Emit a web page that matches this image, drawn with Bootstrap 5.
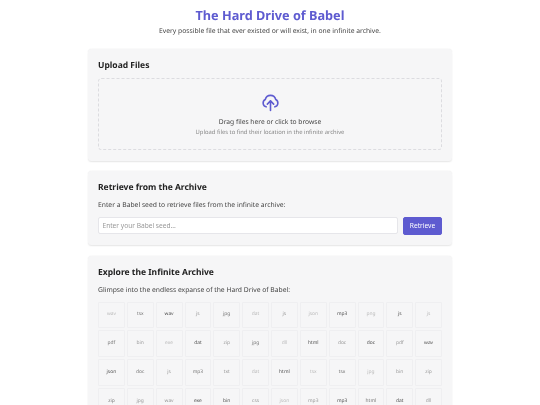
<!DOCTYPE html>
<html lang="en"><head><meta charset="utf-8"><title>The Hard Drive of Babel</title>
<link href="https://cdn.jsdelivr.net/npm/bootstrap@5.3.0/dist/css/bootstrap.min.css" rel="stylesheet">
<style>
html,body{overflow:hidden;height:405px}
body{font-family:"Noto Sans",sans-serif;color:#333;background:#fff;font-size:7px;text-rendering:geometricPrecision}
.page-wrap{width:364px;margin:0 auto;padding-top:5px;filter:blur(.3px)}
.site-title{font-size:12.7px;font-weight:700;color:#5e5bd0;margin:0;line-height:20px}
.site-sub{font-size:6.75px;color:#444;margin:0 0 13px;line-height:11px}
.panel{background:#f6f6f7;border:0;border-radius:3.5px;box-shadow:0 .5px 1.5px rgba(0,0,0,.1);padding:11px 10px 10.5px;margin-bottom:10.25px}
.panel-title{font-size:8.5px;font-weight:700;color:#222;line-height:12px;margin:0 0 5.5px}
.drop-zone{border:.7px dashed #dcdce0;border-radius:3.5px;height:72px;margin-top:6px;padding-top:14px;text-align:center}
.drop-zone svg{display:block;margin:0 auto 4px;width:19px;height:19px}
.drop-main{font-size:6.7px;color:#444;line-height:11px}
.drop-hint{font-size:5.85px;color:#888;line-height:9px;margin-top:.5px}
.panel-text{font-size:6.75px;color:#444;line-height:11px;margin:0 0 6.5px}
.seed-input{font-size:6.6px;height:17px;min-height:0;padding:0 3.5px;border-radius:2px;border:.7px solid #e6e6ea;color:#333}
.seed-input::placeholder{color:#999}
.seed-row{gap:5px}
.seed-btn{font-size:6.6px;height:18px;width:39px;padding:0;border-radius:2px;background:#5e5bd0;border-color:#5e5bd0;color:#fff;flex:none}
.cell-grid{display:grid;grid-template-columns:repeat(12,1fr);gap:2px}
.cell-item{height:26.8px;border:.7px solid #efeff1;border-radius:1px;font-size:4.9px;color:#555;background:#f6f6f7}
.o3{color:#bbb}.o5{color:#999}.o7{color:#777}.o9{color:#505050}
</style></head><body>
<div class="page-wrap">
<header class="text-center">
<h1 class="site-title">The Hard Drive of Babel</h1>
<p class="site-sub">Every possible file that ever existed or will exist, in one infinite archive.</p>
</header>
<section class="panel">
<h2 class="panel-title">Upload Files</h2>
<div class="drop-zone">
<svg viewBox="0 0 24 24" fill="none" stroke="#5e5bd0" stroke-width="2" stroke-linecap="round" stroke-linejoin="round"><path d="M6.5 17.5A5 5 0 0 1 5.4 8.2 6.8 6.8 0 0 1 18.6 8.2 5 5 0 0 1 17.5 17.5"/><path d="M12 22V10"/><path d="M8 14l4-4 4 4"/></svg>
<div class="drop-main">Drag files here or click to browse</div>
<div class="drop-hint">Upload files to find their location in the infinite archive</div>
</div>
</section>
<section class="panel">
<h2 class="panel-title">Retrieve from the Archive</h2>
<p class="panel-text">Enter a Babel seed to retrieve files from the infinite archive:</p>
<div class="d-flex seed-row align-items-center">
<input class="form-control seed-input" type="text" placeholder="Enter your Babel seed...">
<button class="btn btn-primary seed-btn" type="button">Retrieve</button>
</div>
</section>
<section class="panel">
<h2 class="panel-title">Explore the Infinite Archive</h2>
<p class="panel-text">Glimpse into the endless expanse of the Hard Drive of Babel:</p>
<div class="cell-grid">
<div class="cell-item d-flex align-items-center justify-content-center o3">wav</div><div class="cell-item d-flex align-items-center justify-content-center o7">tsx</div><div class="cell-item d-flex align-items-center justify-content-center o9">wav</div><div class="cell-item d-flex align-items-center justify-content-center o5">js</div><div class="cell-item d-flex align-items-center justify-content-center o7">jpg</div><div class="cell-item d-flex align-items-center justify-content-center o3">dat</div><div class="cell-item d-flex align-items-center justify-content-center o5">js</div><div class="cell-item d-flex align-items-center justify-content-center o3">json</div><div class="cell-item d-flex align-items-center justify-content-center o9">mp3</div><div class="cell-item d-flex align-items-center justify-content-center o3">png</div><div class="cell-item d-flex align-items-center justify-content-center o9">js</div><div class="cell-item d-flex align-items-center justify-content-center o3">js</div>
<div class="cell-item d-flex align-items-center justify-content-center o7">pdf</div><div class="cell-item d-flex align-items-center justify-content-center o5">bin</div><div class="cell-item d-flex align-items-center justify-content-center o3">exe</div><div class="cell-item d-flex align-items-center justify-content-center o9">dat</div><div class="cell-item d-flex align-items-center justify-content-center o5">zip</div><div class="cell-item d-flex align-items-center justify-content-center o7">jpg</div><div class="cell-item d-flex align-items-center justify-content-center o3">dll</div><div class="cell-item d-flex align-items-center justify-content-center o9">html</div><div class="cell-item d-flex align-items-center justify-content-center o5">doc</div><div class="cell-item d-flex align-items-center justify-content-center o9">doc</div><div class="cell-item d-flex align-items-center justify-content-center o5">pdf</div><div class="cell-item d-flex align-items-center justify-content-center o9">wav</div>
<div class="cell-item d-flex align-items-center justify-content-center o9">json</div><div class="cell-item d-flex align-items-center justify-content-center o7">doc</div><div class="cell-item d-flex align-items-center justify-content-center o5">js</div><div class="cell-item d-flex align-items-center justify-content-center o7">mp3</div><div class="cell-item d-flex align-items-center justify-content-center o5">txt</div><div class="cell-item d-flex align-items-center justify-content-center o3">dat</div><div class="cell-item d-flex align-items-center justify-content-center o9">html</div><div class="cell-item d-flex align-items-center justify-content-center o3">tsx</div><div class="cell-item d-flex align-items-center justify-content-center o7">tsx</div><div class="cell-item d-flex align-items-center justify-content-center o3">jpg</div><div class="cell-item d-flex align-items-center justify-content-center o5">bin</div><div class="cell-item d-flex align-items-center justify-content-center o5">zip</div>
<div class="cell-item d-flex align-items-center justify-content-center o7">zip</div><div class="cell-item d-flex align-items-center justify-content-center o5">jpg</div><div class="cell-item d-flex align-items-center justify-content-center o5">wav</div><div class="cell-item d-flex align-items-center justify-content-center o9">exe</div><div class="cell-item d-flex align-items-center justify-content-center o9">bin</div><div class="cell-item d-flex align-items-center justify-content-center o5">css</div><div class="cell-item d-flex align-items-center justify-content-center o3">json</div><div class="cell-item d-flex align-items-center justify-content-center o5">mp3</div><div class="cell-item d-flex align-items-center justify-content-center o9">mp3</div><div class="cell-item d-flex align-items-center justify-content-center o7">html</div><div class="cell-item d-flex align-items-center justify-content-center o9">dat</div><div class="cell-item d-flex align-items-center justify-content-center o5">dll</div>
</div>
</section>
</div>
<script src="https://cdn.jsdelivr.net/npm/bootstrap@5.3.0/dist/js/bootstrap.bundle.min.js"></script>
</body></html>
